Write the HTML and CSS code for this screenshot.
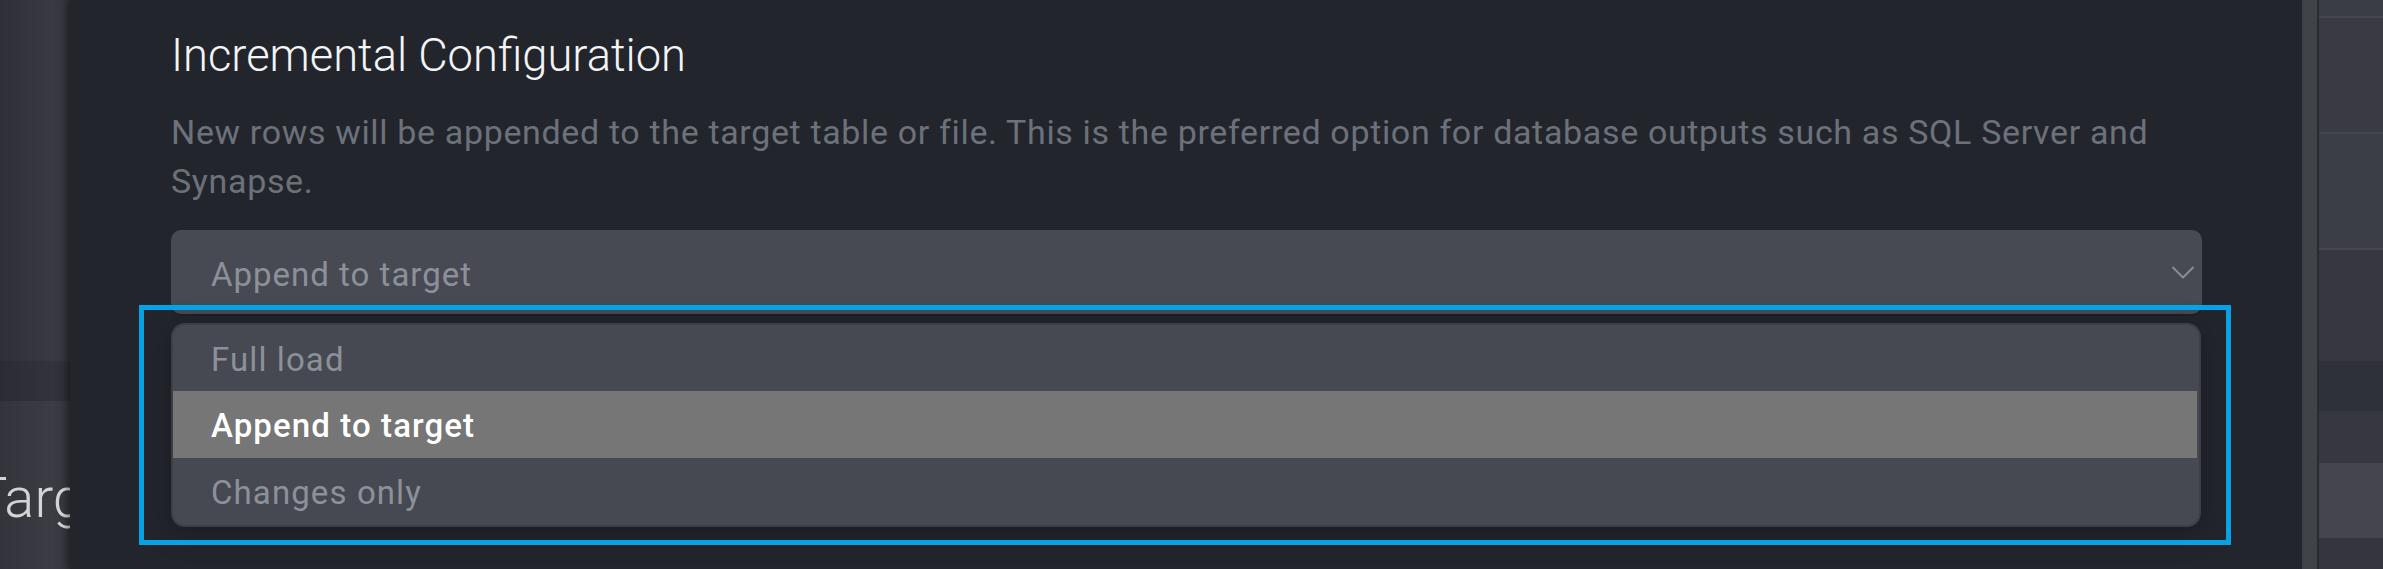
FILE: index.html
```html
<!DOCTYPE html>
<html lang="en">
<head>
<meta charset="utf-8">
<title>Incremental Configuration</title>
<link rel="stylesheet" href="styles.css">
</head>
<body>
<div class="app">
  <aside class="left-bg">
    <div class="lb-band lb-top"></div>
    <div class="lb-band lb-mid"></div>
    <div class="lb-band lb-bottom"><h1 class="bg-heading">Target</h1></div>
  </aside>
  <main class="modal">
    <h2 class="title">Incremental Configuration</h2>
    <p class="desc">New rows will be appended to the target table or file. This is the preferred option for database outputs such as SQL Server and Synapse.</p>
    <div class="select-wrap">
      <div class="select">
        <span class="select-value">Append to target</span>
        <svg class="chevron" width="22" height="13" viewBox="0 0 22 13" aria-hidden="true"><path d="M1 1.5 L11 11.5 L21 1.5" fill="none" stroke="#8b8f97" stroke-width="1.8" stroke-linecap="round" stroke-linejoin="round"/></svg>
      </div>
      <ul class="menu">
        <li class="opt opt-first">Full load</li>
        <li class="opt opt-active">Append to target</li>
        <li class="opt">Changes only</li>
      </ul>
    </div>
  </main>
  <div class="scroll-strip"></div>
  <aside class="right-bg">
    <div class="rb rb1"></div>
    <div class="rb rb-line"></div>
    <div class="rb rb2"></div>
    <div class="rb rb-line"></div>
    <div class="rb rb3"></div>
    <div class="rb rb-line"></div>
    <div class="rb rb4"></div>
    <div class="rb rb5"></div>
    <div class="rb rb6"></div>
    <div class="rb rb7"></div>
    <div class="rb rb8"></div>
  </aside>
</div>
<div class="highlight-box"></div>
</body>
</html>
```

FILE: styles.css
```css
* { box-sizing: border-box; }
html, body {
  margin: 0;
  padding: 0;
  width: 2383px;
  height: 569px;
  overflow: hidden;
  background: #23252d;
  font-family: Roboto, "Liberation Sans", Arial, sans-serif;
}
.app {
  display: flex;
  height: 569px;
  width: 2383px;
}
/* left background page (dimmed) */
.left-bg {
  width: 70px;
  flex: none;
  display: flex;
  flex-direction: column;
  overflow: hidden;
}
.lb-band { width: 100%; }
.lb-top {
  height: 361px;
  background: linear-gradient(90deg, #2f3037 0%, #393a42 75%, #31323a 100%);
}
.lb-mid {
  height: 40px;
  background: linear-gradient(90deg, #2b2c33 0%, #32333b 75%, #2b2c33 100%);
}
.lb-bottom {
  flex: 1;
  padding-top: 64px;
  background: linear-gradient(90deg, #33343b 0%, #3b3c44 75%, #33343b 100%);
}
.bg-heading {
  margin: 0 0 0 -26px;
  font-size: 56px;
  line-height: 66px;
  font-weight: 300;
  color: #d4d4d7;
  white-space: nowrap;
}
/* modal panel */
.modal {
  width: 2232px;
  flex: none;
  background: #23252d;
  padding: 29px 100px 0 101px;
  box-shadow: -3px 0 6px rgba(0, 0, 0, 0.35);
  position: relative;
  z-index: 1;
}
.title {
  margin: 0;
  font-size: 45.3px;
  line-height: 54px;
  font-weight: 300;
  color: #f4f4f6;
}
.desc {
  margin: 25px 0 0;
  font-size: 34px;
  line-height: 49px;
  letter-spacing: 0.65px;
  font-weight: 400;
  color: #6c717a;
}
.select-wrap {
  position: relative;
  margin-top: 24px;
}
.select {
  height: 84px;
  border-radius: 10px;
  background: #474a53;
  display: flex;
  align-items: center;
  justify-content: space-between;
  padding: 0 8px 0 40px;
  box-shadow: 0 2px 0 rgba(0, 0, 0, 0.15);
}
.select-value {
  padding-top: 6px;
  font-size: 33px;
  line-height: 40px;
  letter-spacing: 1px;
  color: #8c9199;
}
.chevron { display: block; }
.menu {
  position: absolute;
  top: calc(100% + 9px);
  left: 0;
  right: 1px;
  margin: 0;
  padding: 0;
  list-style: none;
  background: #464951;
  border: 2px solid #3d3f46;
  border-radius: 14px;
  overflow: hidden;
  box-shadow: 0 6px 30px rgba(0, 0, 0, 0.25);
}
.opt {
  height: 67px;
  padding: 2px 0 0 38px;
  margin-right: 2px;
  font-size: 33px;
  line-height: 65px;
  letter-spacing: 1.1px;
  color: #8c9199;
}
.opt-first { height: 66px; }
.opt-active {
  background: #767676;
  color: #ffffff;
  font-weight: 500;
}
/* scrollbar strip between modal and page */
.scroll-strip {
  width: 17px;
  flex: none;
  background: #41434b;
  border-right: 2px solid #2a2b31;
}
/* right background page (dimmed) */
.right-bg {
  flex: 1;
  display: flex;
  flex-direction: column;
  box-shadow: inset 18px 0 16px -8px rgba(0, 0, 0, 0.28);
  position: relative;
}
.rb { width: 100%; flex: none; }
.rb-line { height: 2px; background: #45474f; }
.rb1 { height: 16px; background: #3b3d45; }
.rb2 { height: 114px; background: #393a43; }
.rb3 { height: 114px; background: #3c3e46; }
.rb4 { height: 111px; background: #37383f; }
.rb5 { height: 50px; background: #2f3139; }
.rb6 { height: 52px; background: #37383f; }
.rb7 { height: 75px; background: #44454e; }
.rb8 { flex: 1; background: #34353d; }
/* annotation overlay */
.highlight-box {
  position: absolute;
  left: 139px;
  top: 305px;
  width: 2092px;
  height: 240px;
  border: 5px solid #03a3e5;
  z-index: 5;
  pointer-events: none;
}
```
